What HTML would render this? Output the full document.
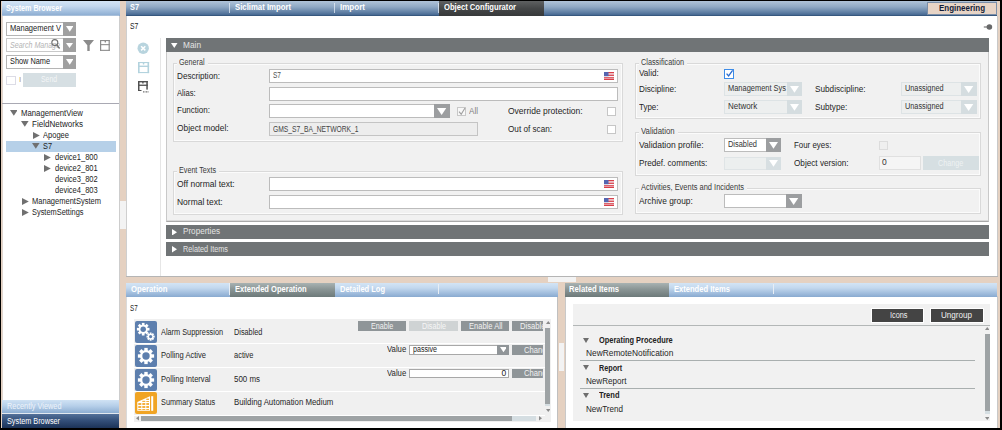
<!DOCTYPE html>
<html><head><meta charset="utf-8">
<style>
*{margin:0;padding:0;box-sizing:border-box}
html,body{width:1002px;height:430px;overflow:hidden;background:#000}
body{position:relative;font-family:"Liberation Sans",sans-serif;font-size:8px;color:#222}
.a{position:absolute}
.t{position:absolute;white-space:nowrap;line-height:10px}
</style></head><body>
<div class="a" style="left:1px;top:1px;width:999px;height:427px;background:#e5d1c1;"></div>
<div class="a" style="left:2px;top:16px;width:118px;height:384px;background:#fff;border-right:1px solid #cdcdcd;border-left:1px solid #e0d6cf"></div>
<div class="a" style="left:2px;top:1px;width:117.5px;height:15px;background:linear-gradient(#d3e4f5,#c3d8ee 35%,#a3bfde 70%,#89aad0);"></div>
<div class="a" style="left:2px;top:15px;width:117px;height:1px;background:#a9c0da;"></div>
<div class="t" style="left:6px;top:3px;font-size:8.5px;color:#fff;font-weight:bold;transform:scaleX(0.841);transform-origin:0 0;">System Browser</div>
<div class="a" style="left:6px;top:22px;width:70px;height:14px;background:#fff;border:1px solid #b5b5b5"></div>
<div class="a" style="left:63px;top:22px;width:13px;height:14px;background:#a0a0a0;"></div>
<svg class="a" style="left:65.73px;top:26.4725px" width="7.54" height="5.65"><path d="M0 0H7.54L3.77 5.65Z" fill="#fff"/></svg>
<div class="t" style="left:10px;top:23px;font-size:8.5px;color:#1a1a1a;transform:scaleX(0.885);transform-origin:0 0;">Management V</div>
<div class="a" style="left:6px;top:38px;width:70px;height:14px;background:#fff;border:1px solid #c9c9c9"></div>
<div class="a" style="left:63px;top:38px;width:13px;height:14px;background:#a0a0a0;"></div>
<svg class="a" style="left:65.73px;top:42.4725px" width="7.54" height="5.65"><path d="M0 0H7.54L3.77 5.65Z" fill="#fff"/></svg>
<div class="t" style="left:10px;top:40px;font-size:8.5px;color:#b4b4b4;font-style:italic;transform:scaleX(0.833);transform-origin:0 0;">Search Manage</div>
<svg class="a" style="left:50px;top:38px" width="12" height="14"><circle cx="4.8" cy="4.6" r="3" fill="none" stroke="#707070" stroke-width="1.1"/><line x1="6.8" y1="6.8" x2="9.6" y2="10.5" stroke="#707070" stroke-width="1.3"/></svg>
<div class="a" style="left:63px;top:38px;width:13px;height:14px;background:#a0a0a0;"></div>
<svg class="a" style="left:66px;top:42.5px" width="7" height="5"><path d="M0 0H7L3.5 5Z" fill="#fff"/></svg>
<svg class="a" style="left:83px;top:40px" width="12" height="12"><path d="M0 0H11L6.7 5.3V11H4.3V5.3Z" fill="#8c8c8c"/></svg>
<svg class="a" style="left:100px;top:40px" width="10" height="11"><g fill="#8c8c8c"><rect x="0" y="0" width="1.2" height="10.9"/><rect x="8.6" y="0" width="1.2" height="10.9"/><rect x="0" y="0" width="9.8" height="1.1"/><rect x="0" y="4.1" width="9.8" height="1.1"/><rect x="0" y="9.8" width="9.8" height="1.1"/><rect x="4.6" y="0.5" width="1.4" height="1.9" rx="0.5"/></g></svg>
<div class="a" style="left:6px;top:55px;width:70px;height:14px;background:#fff;border:1px solid #b5b5b5"></div>
<div class="a" style="left:63px;top:55px;width:13px;height:14px;background:#a0a0a0;"></div>
<svg class="a" style="left:65.73px;top:59.4725px" width="7.54" height="5.65"><path d="M0 0H7.54L3.77 5.65Z" fill="#fff"/></svg>
<div class="t" style="left:10px;top:56px;font-size:8.5px;color:#1a1a1a;transform:scaleX(0.864);transform-origin:0 0;">Show Name</div>
<div class="a" style="left:6px;top:76px;width:10px;height:9px;background:#fff;border:1px solid #dcdce6"></div>
<div class="t" style="left:19px;top:75px;font-size:8px;color:#b0a070;">I</div>
<div class="a" style="left:23px;top:73px;width:53px;height:14px;background:#d6dfe3;"></div>
<div class="t" style="left:41px;top:74px;font-size:8.5px;color:#f4f6f7;transform:scaleX(0.806);transform-origin:0 0;">Send</div>
<div class="a" style="left:2px;top:103px;width:117px;height:1px;background:#a9a9b3;"></div>
<div class="a" style="left:6px;top:141px;width:110px;height:11px;background:#b6d0e8;"></div>
<svg class="a" style="left:9.8px;top:110.2px" width="7.6" height="5.8"><path d="M0 0H7.6L3.8 5.8Z" fill="#707070"/></svg>
<div class="t" style="left:20.6px;top:108px;font-size:8.5px;color:#1c1c1c;transform:scaleX(0.912);transform-origin:0 0;">ManagementView</div>
<svg class="a" style="left:21.1px;top:121.2px" width="7.6" height="5.8"><path d="M0 0H7.6L3.8 5.8Z" fill="#707070"/></svg>
<div class="t" style="left:31.9px;top:119px;font-size:8.5px;color:#1c1c1c;transform:scaleX(0.947);transform-origin:0 0;">FieldNetworks</div>
<svg class="a" style="left:33.1px;top:131.7px" width="6.8" height="7"><path d="M0 0L6.8 3.5L0 7Z" fill="#707070"/></svg>
<div class="t" style="left:43.2px;top:130px;font-size:8.5px;color:#1c1c1c;transform:scaleX(0.887);transform-origin:0 0;">Apogee</div>
<svg class="a" style="left:32.4px;top:143.3px" width="7.6" height="5.8"><path d="M0 0H7.6L3.8 5.8Z" fill="#707070"/></svg>
<div class="t" style="left:43.2px;top:141px;font-size:8.5px;color:#1c1c1c;transform:scaleX(0.865);transform-origin:0 0;">S7</div>
<svg class="a" style="left:44.4px;top:153.8px" width="6.8" height="7"><path d="M0 0L6.8 3.5L0 7Z" fill="#707070"/></svg>
<div class="t" style="left:54.5px;top:152px;font-size:8.5px;color:#1c1c1c;transform:scaleX(0.886);transform-origin:0 0;">device1_800</div>
<svg class="a" style="left:44.4px;top:164.8px" width="6.8" height="7"><path d="M0 0L6.8 3.5L0 7Z" fill="#707070"/></svg>
<div class="t" style="left:54.5px;top:163px;font-size:8.5px;color:#1c1c1c;transform:scaleX(0.886);transform-origin:0 0;">device2_801</div>
<div class="t" style="left:54.5px;top:174px;font-size:8.5px;color:#1c1c1c;transform:scaleX(0.886);transform-origin:0 0;">device3_802</div>
<div class="t" style="left:54.5px;top:185px;font-size:8.5px;color:#1c1c1c;transform:scaleX(0.886);transform-origin:0 0;">device4_803</div>
<svg class="a" style="left:21.8px;top:198.0px" width="6.8" height="7"><path d="M0 0L6.8 3.5L0 7Z" fill="#707070"/></svg>
<div class="t" style="left:31.9px;top:196px;font-size:8.5px;color:#1c1c1c;transform:scaleX(0.885);transform-origin:0 0;">ManagementSystem</div>
<svg class="a" style="left:21.8px;top:209.0px" width="6.8" height="7"><path d="M0 0L6.8 3.5L0 7Z" fill="#707070"/></svg>
<div class="t" style="left:31.9px;top:207px;font-size:8.5px;color:#1c1c1c;transform:scaleX(0.872);transform-origin:0 0;">SystemSettings</div>
<div class="a" style="left:2px;top:400px;width:117px;height:13px;background:linear-gradient(#d0e2f4,#b6cfe9 45%,#8daed2);"></div>
<div class="t" style="left:7px;top:401px;font-size:8.5px;color:#eef3fa;transform:scaleX(0.863);transform-origin:0 0;">Recently Viewed</div>
<div class="a" style="left:2px;top:413px;width:117px;height:1px;background:#e3e9f0;"></div>
<div class="a" style="left:2px;top:414px;width:117px;height:14px;background:linear-gradient(#53719a,#34507a 45%,#1c3358);"></div>
<div class="t" style="left:7px;top:416px;font-size:8.5px;color:#fff;transform:scaleX(0.857);transform-origin:0 0;">System Browser</div>
<div class="a" style="left:126px;top:16px;width:872px;height:260px;background:#fff;border-left:1px solid #cfcfcf;border-right:1px solid #c8c8c8"></div>
<div class="a" style="left:126px;top:1px;width:871px;height:15px;background:linear-gradient(#b0c3d9,#8fa8c4 40%,#5a7aa0 80%,#3b5e8a);"></div>
<div class="a" style="left:126px;top:15px;width:871px;height:1px;background:#37587f;"></div>
<div class="t" style="left:130px;top:2px;font-size:8.5px;color:#fff;font-weight:bold;transform:scaleX(0.865);transform-origin:0 0;">S7</div>
<div class="a" style="left:229px;top:3px;width:1px;height:10px;background:linear-gradient(#d8e2ee,#c0cfe0);"></div>
<div class="a" style="left:334px;top:3px;width:1px;height:10px;background:linear-gradient(#d8e2ee,#c0cfe0);"></div>
<div class="a" style="left:438px;top:3px;width:1px;height:10px;background:linear-gradient(#d8e2ee,#c0cfe0);"></div>
<div class="t" style="left:235px;top:2px;font-size:8.5px;color:#fff;font-weight:bold;transform:scaleX(0.912);transform-origin:0 0;">Siclimat Import</div>
<div class="t" style="left:340px;top:2px;font-size:8.5px;color:#fff;font-weight:bold;transform:scaleX(0.945);transform-origin:0 0;">Import</div>
<div class="a" style="left:439px;top:1px;width:105px;height:15px;background:linear-gradient(#5f6162,#454748 50%,#37393a);"></div>
<div class="t" style="left:444px;top:2px;font-size:8.5px;color:#fff;font-weight:bold;transform:scaleX(0.897);transform-origin:0 0;">Object Configurator</div>
<div class="a" style="left:927px;top:2px;width:70px;height:13px;background:#e7d4c6;border:1px solid #7a8ea8"></div>
<div class="t" style="left:939px;top:3px;font-size:9.5px;color:#121c38;font-weight:bold;transform:scaleX(0.838);transform-origin:0 0;">Engineering</div>
<div class="t" style="left:130px;top:21px;font-size:9px;color:#222;transform:scaleX(0.755);transform-origin:0 0;">S7</div>
<svg class="a" style="left:982px;top:23px" width="12" height="8"><line x1="1.8" y1="4" x2="5" y2="4" stroke="#8a8a8a" stroke-width="1.4"/><circle cx="7.4" cy="4" r="2.8" fill="#676869"/></svg>
<div class="a" style="left:160px;top:38px;width:1px;height:238px;background:#e6e6e6;"></div>
<svg class="a" style="left:137px;top:41.5px" width="13" height="13"><circle cx="6.2" cy="6.3" r="5.7" fill="#b8d4de"/><path d="M4.1 4.2L8.3 8.4M8.3 4.2L4.1 8.4" stroke="#fff" stroke-width="1.5"/></svg>
<svg class="a" style="left:137.8px;top:61.8px" width="12" height="12"><g fill="#b3d3de"><rect x="0" y="0" width="1.6" height="11.1"/><rect x="9.5" y="0" width="1.6" height="11.1"/><rect x="0" y="0" width="11.1" height="1.1"/><rect x="0" y="3.6" width="11.1" height="1.4"/><rect x="0" y="10" width="11.1" height="1.1"/><rect x="4.8" y="0.6" width="1.5" height="1.8" rx="0.5"/></g></svg>
<svg class="a" style="left:138px;top:81px" width="12" height="12"><g fill="#505050"><rect x="0" y="0" width="1.5" height="10"/><rect x="0" y="9" width="3.5" height="1"/><rect x="8.3" y="0" width="1.5" height="8.6"/><rect x="0" y="0" width="9.8" height="1.4"/><rect x="0" y="3.6" width="9.8" height="1.3"/><rect x="4.2" y="0.8" width="1.4" height="1.8" rx="0.5"/><rect x="5" y="10.4" width="1" height="1"/><rect x="6.5" y="10.4" width="1" height="1"/><rect x="8" y="10.4" width="1" height="1"/><rect x="9.5" y="10.4" width="1" height="1"/></g></svg>
<div class="a" style="left:166px;top:38px;width:823px;height:14px;background:#707476;"></div>
<svg class="a" style="left:171px;top:42.5px" width="6.5" height="5"><path d="M0 0H6.5L3.25 5Z" fill="#fff"/></svg>
<div class="t" style="left:183px;top:39.5px;font-size:8.5px;color:#e4e4e4;transform:scaleX(0.978);transform-origin:0 0;">Main</div>
<div class="a" style="left:166px;top:52px;width:823px;height:170px;background:#f1f1f1;border:1px solid #c9c9c9;border-top:none;border-bottom:1px solid #a9a9a9"></div>
<div class="a" style="left:167px;top:220px;width:821px;height:1px;background:#d9d9d9;"></div>
<div class="a" style="left:173px;top:63px;width:450px;height:79px;background:transparent;border:1px solid #d9d9d9"></div>
<div class="a" style="left:174px;top:64px;width:448px;height:77px;background:transparent;border:1px solid #fbfbfb"></div>
<div class="a" style="left:177px;top:62px;width:30.5px;height:3px;background:#f1f1f1;"></div>
<div class="t" style="left:179px;top:57px;font-size:8.5px;color:#3a3a3a;transform:scaleX(0.843);transform-origin:0 0;">General</div>
<div class="t" style="left:177px;top:71px;font-size:9px;color:#1f1f1f;transform:scaleX(0.905);transform-origin:0 0;">Description:</div>
<div class="t" style="left:177px;top:88px;font-size:9px;color:#1f1f1f;transform:scaleX(0.850);transform-origin:0 0;">Alias:</div>
<div class="t" style="left:177px;top:105px;font-size:9px;color:#1f1f1f;transform:scaleX(0.892);transform-origin:0 0;">Function:</div>
<div class="t" style="left:177px;top:123px;font-size:9px;color:#1f1f1f;transform:scaleX(0.929);transform-origin:0 0;">Object model:</div>
<div class="a" style="left:269px;top:69px;width:349px;height:14px;background:#fff;border:1px solid #bcbcbc"></div>
<div class="t" style="left:273px;top:70px;font-size:8.5px;color:#505050;transform:scaleX(0.769);transform-origin:0 0;">S7</div>
<svg class="a" style="left:604px;top:72px" width="10" height="8"><rect width="10" height="8" fill="#f4f4f8"/><g fill="#d9404a"><rect y="0" width="10" height="1.3"/><rect y="2.6" width="10" height="1.3"/><rect y="5.2" width="10" height="1.3"/><rect y="7" width="10" height="1"/></g><rect width="4.5" height="4.2" fill="#5565b0"/></svg>
<div class="a" style="left:269px;top:87px;width:349px;height:14px;background:#fff;border:1px solid #bcbcbc"></div>
<div class="a" style="left:269px;top:104px;width:181px;height:14px;background:#fff;border:1px solid #bcbcbc"></div>
<div class="a" style="left:434px;top:104px;width:16px;height:14px;background:#9c9ea0;"></div>
<svg class="a" style="left:437.36px;top:107.82px" width="9.28" height="6.96"><path d="M0 0H9.28L4.64 6.96Z" fill="#fff"/></svg>
<div class="a" style="left:457px;top:106.5px;width:9px;height:9.5px;background:#f8f8f8;border:1px solid #c8c8c8"></div>
<svg class="a" style="left:458px;top:107px" width="8" height="9"><path d="M1 4.6L3.2 7.2L7 1" fill="none" stroke="#a0a0a0" stroke-width="1.1"/></svg>
<div class="t" style="left:469px;top:106px;font-size:8.5px;color:#808080;transform:scaleX(0.952);transform-origin:0 0;">All</div>
<div class="a" style="left:269px;top:122px;width:209px;height:14px;background:#ededed;border:1px solid #c4c4c4"></div>
<div class="t" style="left:273px;top:124px;font-size:8.5px;color:#444;transform:scaleX(0.791);transform-origin:0 0;">GMS_S7_BA_NETWORK_1</div>
<div class="t" style="left:508px;top:106px;font-size:9px;color:#1f1f1f;transform:scaleX(0.945);transform-origin:0 0;">Override protection:</div>
<div class="t" style="left:508px;top:124px;font-size:9px;color:#1f1f1f;transform:scaleX(0.906);transform-origin:0 0;">Out of scan:</div>
<div class="a" style="left:607px;top:107px;width:9px;height:9px;background:#fff;border:1px solid #c6c6c6"></div>
<div class="a" style="left:607px;top:125px;width:9px;height:9px;background:#fff;border:1px solid #c6c6c6"></div>
<div class="a" style="left:173px;top:171px;width:450px;height:44px;background:transparent;border:1px solid #d9d9d9"></div>
<div class="a" style="left:174px;top:172px;width:448px;height:42px;background:transparent;border:1px solid #fbfbfb"></div>
<div class="a" style="left:177px;top:170px;width:42px;height:3px;background:#f1f1f1;"></div>
<div class="t" style="left:179px;top:165px;font-size:8.5px;color:#3a3a3a;transform:scaleX(0.845);transform-origin:0 0;">Event Texts</div>
<div class="t" style="left:177px;top:179px;font-size:9px;color:#1f1f1f;transform:scaleX(0.939);transform-origin:0 0;">Off normal text:</div>
<div class="t" style="left:177px;top:197px;font-size:9px;color:#1f1f1f;transform:scaleX(0.940);transform-origin:0 0;">Normal text:</div>
<div class="a" style="left:269px;top:177px;width:349px;height:14px;background:#fff;border:1px solid #bcbcbc"></div>
<svg class="a" style="left:604px;top:180px" width="10" height="8"><rect width="10" height="8" fill="#f4f4f8"/><g fill="#d9404a"><rect y="0" width="10" height="1.3"/><rect y="2.6" width="10" height="1.3"/><rect y="5.2" width="10" height="1.3"/><rect y="7" width="10" height="1"/></g><rect width="4.5" height="4.2" fill="#5565b0"/></svg>
<div class="a" style="left:269px;top:195px;width:349px;height:14px;background:#fff;border:1px solid #bcbcbc"></div>
<svg class="a" style="left:604px;top:198px" width="10" height="8"><rect width="10" height="8" fill="#f4f4f8"/><g fill="#d9404a"><rect y="0" width="10" height="1.3"/><rect y="2.6" width="10" height="1.3"/><rect y="5.2" width="10" height="1.3"/><rect y="7" width="10" height="1"/></g><rect width="4.5" height="4.2" fill="#5565b0"/></svg>
<div class="a" style="left:635px;top:63px;width:346px;height:56px;background:transparent;border:1px solid #d9d9d9"></div>
<div class="a" style="left:636px;top:64px;width:344px;height:54px;background:transparent;border:1px solid #fbfbfb"></div>
<div class="a" style="left:639px;top:62px;width:48px;height:3px;background:#f1f1f1;"></div>
<div class="t" style="left:641px;top:57px;font-size:8.5px;color:#3a3a3a;transform:scaleX(0.859);transform-origin:0 0;">Classification</div>
<div class="t" style="left:639px;top:68px;font-size:9px;color:#1f1f1f;transform:scaleX(0.902);transform-origin:0 0;">Valid:</div>
<div class="t" style="left:639px;top:84px;font-size:9px;color:#1f1f1f;transform:scaleX(0.910);transform-origin:0 0;">Discipline:</div>
<div class="t" style="left:639px;top:102px;font-size:9px;color:#1f1f1f;transform:scaleX(0.882);transform-origin:0 0;">Type:</div>
<div class="a" style="left:724px;top:69px;width:10px;height:9.5px;background:#fff;border:1px solid #3d8ce8"></div>
<svg class="a" style="left:725px;top:69px" width="9" height="9"><path d="M1.6 4.6L3.6 7L7.6 1.4" fill="none" stroke="#2b6dd0" stroke-width="1.3"/></svg>
<div class="a" style="left:724px;top:82px;width:78px;height:14px;background:#edefef;border:1px solid #dde3e5"></div>
<div class="a" style="left:786.5px;top:82px;width:15.5px;height:14px;background:#d5dde0;"></div>
<svg class="a" style="left:789.755px;top:85.92875px" width="8.99" height="6.74"><path d="M0 0H8.99L4.495 6.74Z" fill="#fff"/></svg>
<div class="t" style="left:728px;top:83px;font-size:8.5px;color:#333;transform:scaleX(0.877);transform-origin:0 0;">Management Sys</div>
<div class="a" style="left:724px;top:100px;width:78px;height:14px;background:#edefef;border:1px solid #dde3e5"></div>
<div class="a" style="left:786.5px;top:100px;width:15.5px;height:14px;background:#d5dde0;"></div>
<svg class="a" style="left:789.755px;top:103.92875px" width="8.99" height="6.74"><path d="M0 0H8.99L4.495 6.74Z" fill="#fff"/></svg>
<div class="t" style="left:728px;top:101px;font-size:8.5px;color:#333;transform:scaleX(0.939);transform-origin:0 0;">Network</div>
<div class="t" style="left:815px;top:84px;font-size:9px;color:#1f1f1f;transform:scaleX(0.911);transform-origin:0 0;">Subdiscipline:</div>
<div class="t" style="left:815px;top:102px;font-size:9px;color:#1f1f1f;transform:scaleX(0.909);transform-origin:0 0;">Subtype:</div>
<div class="a" style="left:901px;top:82px;width:76px;height:14px;background:#edefef;border:1px solid #dde3e5"></div>
<div class="a" style="left:961px;top:82px;width:16px;height:14px;background:#d5dde0;"></div>
<svg class="a" style="left:964.36px;top:85.82px" width="9.28" height="6.96"><path d="M0 0H9.28L4.64 6.96Z" fill="#fff"/></svg>
<div class="t" style="left:905px;top:83px;font-size:8.5px;color:#333;transform:scaleX(0.860);transform-origin:0 0;">Unassigned</div>
<div class="a" style="left:901px;top:100px;width:76px;height:14px;background:#edefef;border:1px solid #dde3e5"></div>
<div class="a" style="left:961px;top:100px;width:16px;height:14px;background:#d5dde0;"></div>
<svg class="a" style="left:964.36px;top:103.82px" width="9.28" height="6.96"><path d="M0 0H9.28L4.64 6.96Z" fill="#fff"/></svg>
<div class="t" style="left:905px;top:101px;font-size:8.5px;color:#333;transform:scaleX(0.860);transform-origin:0 0;">Unassigned</div>
<div class="a" style="left:635px;top:132px;width:346px;height:44px;background:transparent;border:1px solid #d9d9d9"></div>
<div class="a" style="left:636px;top:133px;width:344px;height:42px;background:transparent;border:1px solid #fbfbfb"></div>
<div class="a" style="left:639px;top:131px;width:38.5px;height:3px;background:#f1f1f1;"></div>
<div class="t" style="left:641px;top:125.5px;font-size:8.5px;color:#3a3a3a;transform:scaleX(0.913);transform-origin:0 0;">Validation</div>
<div class="t" style="left:639px;top:139.5px;font-size:9px;color:#1f1f1f;transform:scaleX(0.944);transform-origin:0 0;">Validation profile:</div>
<div class="t" style="left:639px;top:158px;font-size:9px;color:#1f1f1f;transform:scaleX(0.905);transform-origin:0 0;">Predef. comments:</div>
<div class="a" style="left:724px;top:138px;width:57px;height:14px;background:#fff;border:1px solid #bcbcbc"></div>
<div class="a" style="left:765.5px;top:138px;width:15.5px;height:14px;background:#9c9ea0;"></div>
<svg class="a" style="left:768.755px;top:141.92875px" width="8.99" height="6.74"><path d="M0 0H8.99L4.495 6.74Z" fill="#fff"/></svg>
<div class="t" style="left:728px;top:139px;font-size:8.5px;color:#333;transform:scaleX(0.874);transform-origin:0 0;">Disabled</div>
<div class="a" style="left:724px;top:157px;width:57px;height:13px;background:#ecefef;border:1px solid #dfe4e6"></div>
<div class="a" style="left:765.5px;top:157px;width:15.5px;height:13px;background:#d7dfe2;"></div>
<svg class="a" style="left:768.755px;top:160.42875px" width="8.99" height="6.74"><path d="M0 0H8.99L4.495 6.74Z" fill="#fff"/></svg>
<div class="t" style="left:794px;top:139.5px;font-size:9px;color:#1f1f1f;transform:scaleX(0.878);transform-origin:0 0;">Four eyes:</div>
<div class="t" style="left:794px;top:157.5px;font-size:9px;color:#1f1f1f;transform:scaleX(0.908);transform-origin:0 0;">Object version:</div>
<div class="a" style="left:879px;top:141px;width:9px;height:9px;background:#efefef;border:1px solid #dcdcdc"></div>
<div class="a" style="left:879px;top:156px;width:42px;height:14px;background:#f5f5f5;border:1px solid #e0e0e0"></div>
<div class="t" style="left:882px;top:157px;font-size:8.5px;color:#333;">0</div>
<div class="a" style="left:923px;top:156px;width:56px;height:14px;background:#d6dfe2;"></div>
<div class="t" style="left:938px;top:157.5px;font-size:8.5px;color:#eef2f3;transform:scaleX(0.849);transform-origin:0 0;">Change</div>
<div class="a" style="left:635px;top:188px;width:346px;height:26px;background:transparent;border:1px solid #d9d9d9"></div>
<div class="a" style="left:636px;top:189px;width:344px;height:24px;background:transparent;border:1px solid #fbfbfb"></div>
<div class="a" style="left:639px;top:187px;width:108px;height:3px;background:#f1f1f1;"></div>
<div class="t" style="left:641px;top:181.5px;font-size:8.5px;color:#3a3a3a;transform:scaleX(0.879);transform-origin:0 0;">Activities, Events and Incidents</div>
<div class="t" style="left:639px;top:195.5px;font-size:9px;color:#1f1f1f;transform:scaleX(0.927);transform-origin:0 0;">Archive group:</div>
<div class="a" style="left:724px;top:194px;width:78px;height:14px;background:#fff;border:1px solid #bcbcbc"></div>
<div class="a" style="left:786px;top:194px;width:16px;height:14px;background:#9c9ea0;"></div>
<svg class="a" style="left:789.36px;top:197.82000000000002px" width="9.28" height="6.96"><path d="M0 0H9.28L4.64 6.96Z" fill="#fff"/></svg>
<div class="a" style="left:166px;top:224.5px;width:823px;height:14px;background:#707476;"></div>
<svg class="a" style="left:172px;top:228.5px" width="5" height="6.5"><path d="M0 0L5 3.25L0 6.5Z" fill="#fff"/></svg>
<div class="t" style="left:183px;top:226px;font-size:8.5px;color:#e4e4e4;transform:scaleX(0.955);transform-origin:0 0;">Properties</div>
<div class="a" style="left:166px;top:242px;width:823px;height:14px;background:#707476;"></div>
<svg class="a" style="left:172px;top:246px" width="5" height="6.5"><path d="M0 0L5 3.25L0 6.5Z" fill="#fff"/></svg>
<div class="t" style="left:183px;top:243.5px;font-size:8.5px;color:#e4e4e4;transform:scaleX(0.858);transform-origin:0 0;">Related Items</div>
<div class="a" style="left:126px;top:276px;width:872px;height:1px;background:#b5b5b5;"></div>
<div class="a" style="left:126px;top:296px;width:432px;height:132px;background:#fff;border-left:1px solid #dadada;border-right:1px solid #c0c0c0"></div>
<div class="a" style="left:126px;top:282.5px;width:432px;height:14px;background:linear-gradient(#d3e4f5,#c3d8ee 35%,#a3bfde 70%,#89aad0);"></div>
<div class="t" style="left:131px;top:284px;font-size:8.5px;color:#fff;font-weight:bold;transform:scaleX(0.909);transform-origin:0 0;">Operation</div>
<div class="a" style="left:229px;top:283px;width:1px;height:12px;background:#e8eef5;"></div>
<div class="a" style="left:230px;top:282.5px;width:105px;height:14px;background:linear-gradient(#a8b2b2,#8a9595 45%,#6d7a7a);"></div>
<div class="t" style="left:235px;top:284px;font-size:8.5px;color:#fff;font-weight:bold;transform:scaleX(0.887);transform-origin:0 0;">Extended Operation</div>
<div class="t" style="left:340px;top:284px;font-size:8.5px;color:#fff;font-weight:bold;transform:scaleX(0.882);transform-origin:0 0;">Detailed Log</div>
<div class="a" style="left:438px;top:284px;width:1px;height:10px;background:#e8eef5;"></div>
<div class="t" style="left:130px;top:303px;font-size:9px;color:#222;transform:scaleX(0.691);transform-origin:0 0;">S7</div>
<div class="a" style="left:134px;top:318.5px;width:411px;height:24px;background:#f0f0f0;"></div>
<div class="a" style="left:134px;top:343.5px;width:411px;height:23px;background:#f0f0f0;"></div>
<div class="a" style="left:134px;top:367.5px;width:411px;height:23px;background:#f0f0f0;"></div>
<div class="a" style="left:134px;top:391.5px;width:411px;height:23.5px;background:#f0f0f0;"></div>
<svg class="a" style="left:135px;top:320.5px" width="22" height="22"><rect width="22" height="22" rx="2" fill="#5d7fae"/><g transform="translate(8.2,8.2)"><circle r="4.5" fill="#fff"/><rect x="-1.35" y="-6.3" width="2.7" height="12.6" fill="#fff" transform="rotate(0.0)"/><rect x="-1.35" y="-6.3" width="2.7" height="12.6" fill="#fff" transform="rotate(45.0)"/><rect x="-1.35" y="-6.3" width="2.7" height="12.6" fill="#fff" transform="rotate(90.0)"/><rect x="-1.35" y="-6.3" width="2.7" height="12.6" fill="#fff" transform="rotate(135.0)"/><circle r="2.7" fill="#5d7fae"/></g><g transform="translate(15.6,15.6)"><circle r="2.9" fill="#fff"/><rect x="-0.95" y="-4.1" width="1.9" height="8.2" fill="#fff" transform="rotate(0.0)"/><rect x="-0.95" y="-4.1" width="1.9" height="8.2" fill="#fff" transform="rotate(45.0)"/><rect x="-0.95" y="-4.1" width="1.9" height="8.2" fill="#fff" transform="rotate(90.0)"/><rect x="-0.95" y="-4.1" width="1.9" height="8.2" fill="#fff" transform="rotate(135.0)"/><circle r="1.6" fill="#5d7fae"/></g></svg>
<svg class="a" style="left:135px;top:344.5px" width="22" height="22"><rect width="22" height="22" rx="2" fill="#5d7fae"/><g transform="translate(11,11)"><circle r="6" fill="#fff"/><rect x="-1.7" y="-8.1" width="3.4" height="16.2" fill="#fff" transform="rotate(0.0)"/><rect x="-1.7" y="-8.1" width="3.4" height="16.2" fill="#fff" transform="rotate(45.0)"/><rect x="-1.7" y="-8.1" width="3.4" height="16.2" fill="#fff" transform="rotate(90.0)"/><rect x="-1.7" y="-8.1" width="3.4" height="16.2" fill="#fff" transform="rotate(135.0)"/><circle r="3.7" fill="#5d7fae"/></g></svg>
<svg class="a" style="left:135px;top:368.5px" width="22" height="22"><rect width="22" height="22" rx="2" fill="#5d7fae"/><g transform="translate(11,11)"><circle r="6" fill="#fff"/><rect x="-1.7" y="-8.1" width="3.4" height="16.2" fill="#fff" transform="rotate(0.0)"/><rect x="-1.7" y="-8.1" width="3.4" height="16.2" fill="#fff" transform="rotate(45.0)"/><rect x="-1.7" y="-8.1" width="3.4" height="16.2" fill="#fff" transform="rotate(90.0)"/><rect x="-1.7" y="-8.1" width="3.4" height="16.2" fill="#fff" transform="rotate(135.0)"/><circle r="3.7" fill="#5d7fae"/></g></svg>
<svg class="a" style="left:135px;top:391.5px" width="22" height="22"><rect width="22" height="22" rx="2" fill="#f0a424"/>
<path d="M2.3 10L15 4.2V18.8H2.3Z" fill="#fff"/><rect x="16.2" y="4.2" width="2" height="14.6" fill="#fff"/>
<g fill="#f4b040"><rect x="3.3" y="11" width="3" height="2"/><rect x="7.3" y="11" width="3" height="2"/><rect x="11.3" y="11" width="2.7" height="2"/>
<rect x="3.3" y="14" width="3" height="2"/><rect x="7.3" y="14" width="3" height="2"/><rect x="11.3" y="14" width="2.7" height="2"/>
<rect x="3.3" y="17" width="3" height="1"/><rect x="7.3" y="17" width="3" height="1"/><rect x="11.3" y="17" width="2.7" height="1"/>
<rect x="7.3" y="8.8" width="3" height="1.2"/><rect x="11.3" y="6.6" width="2.7" height="1.4"/><rect x="11.3" y="9" width="2.7" height="1"/></g></svg>
<div class="t" style="left:161px;top:327px;font-size:8.5px;color:#262626;transform:scaleX(0.864);transform-origin:0 0;">Alarm Suppression</div>
<div class="t" style="left:233.6px;top:327px;font-size:8.5px;color:#262626;transform:scaleX(0.859);transform-origin:0 0;">Disabled</div>
<div class="t" style="left:161px;top:350px;font-size:8.5px;color:#262626;transform:scaleX(0.890);transform-origin:0 0;">Polling Active</div>
<div class="t" style="left:233.6px;top:350px;font-size:8.5px;color:#262626;transform:scaleX(0.878);transform-origin:0 0;">active</div>
<div class="t" style="left:161px;top:374px;font-size:8.5px;color:#262626;transform:scaleX(0.888);transform-origin:0 0;">Polling Interval</div>
<div class="t" style="left:233.6px;top:374px;font-size:8.5px;color:#262626;transform:scaleX(0.934);transform-origin:0 0;">500 ms</div>
<div class="t" style="left:161px;top:397px;font-size:8.5px;color:#262626;transform:scaleX(0.862);transform-origin:0 0;">Summary Status</div>
<div class="t" style="left:233.6px;top:397px;font-size:8.5px;color:#262626;transform:scaleX(0.922);transform-origin:0 0;">Building Automation Medium</div>
<div class="a" style="left:357.5px;top:321px;width:48.5px;height:10px;background:#8f9598;"></div>
<div class="t" style="left:371px;top:321px;font-size:8.5px;color:#f2f2f2;transform:scaleX(0.843);transform-origin:0 0;">Enable</div>
<div class="a" style="left:409px;top:321px;width:49px;height:10px;background:#cfd3d4;"></div>
<div class="t" style="left:422px;top:321px;font-size:8.5px;color:#f6f6f6;transform:scaleX(0.847);transform-origin:0 0;">Disable</div>
<div class="a" style="left:461px;top:321px;width:48px;height:10px;background:#8f9598;"></div>
<div class="t" style="left:469px;top:321px;font-size:8.5px;color:#f2f2f2;transform:scaleX(0.886);transform-origin:0 0;">Enable All</div>
<div class="a" style="left:512.3px;top:321px;width:30.5px;height:10px;background:#8f9598;overflow:hidden"><div class="t" style="left:7.4px;top:0px;font-size:8.5px;color:#f2f2f2;transform:scaleX(0.9);transform-origin:0 0">Disable</div></div>
<div class="t" style="left:387.3px;top:344px;font-size:8.5px;color:#262626;transform:scaleX(0.910);transform-origin:0 0;">Value</div>
<div class="a" style="left:409px;top:345px;width:100px;height:9.5px;background:#fff;border:1px solid #a8a8a8"></div>
<div class="a" style="left:497px;top:345px;width:12px;height:9.5px;background:#909598;"></div>
<svg class="a" style="left:499.52px;top:347.44px" width="6.96" height="5.22"><path d="M0 0H6.96L3.48 5.22Z" fill="#fff"/></svg>
<div class="t" style="left:413px;top:343.5px;font-size:8.5px;color:#222;transform:scaleX(0.833);transform-origin:0 0;">passive</div>
<div class="a" style="left:512.3px;top:345px;width:30.5px;height:9.5px;background:#8f9598;overflow:hidden"><div class="t" style="left:11.4px;top:-0.5px;font-size:8.5px;color:#f2f2f2;transform:scaleX(0.9);transform-origin:0 0">Change</div></div>
<div class="t" style="left:387.3px;top:367.5px;font-size:8.5px;color:#262626;transform:scaleX(0.910);transform-origin:0 0;">Value</div>
<div class="a" style="left:409px;top:368.5px;width:100px;height:9.5px;background:#fff;border:1px solid #a8a8a8"></div>
<div class="t" style="left:501.5px;top:367.5px;font-size:8.5px;color:#222;">0</div>
<div class="a" style="left:512.3px;top:368.5px;width:30.5px;height:9.5px;background:#8f9598;overflow:hidden"><div class="t" style="left:11.4px;top:-0.5px;font-size:8.5px;color:#f2f2f2;transform:scaleX(0.9);transform-origin:0 0">Change</div></div>
<div class="a" style="left:544.5px;top:318.5px;width:6px;height:97px;background:#f0f0f0;"></div>
<svg class="a" style="left:545.5px;top:320.5px" width="4.5" height="3"><path d="M0 3H4.5L2.25 0Z" fill="#8a8a8a"/></svg>
<div class="a" style="left:545px;top:328px;width:5px;height:76px;background:#9ea3a5;"></div>
<div class="a" style="left:545px;top:404px;width:5px;height:2px;background:#d5dee2;"></div>
<svg class="a" style="left:545.5px;top:408.5px" width="4.5" height="3"><path d="M0 0H4.5L2.25 3Z" fill="#8a8a8a"/></svg>
<div class="a" style="left:134px;top:415.5px;width:417px;height:6px;background:#f0f0f0;"></div>
<svg class="a" style="left:135.5px;top:416.3px" width="3" height="4.5"><path d="M3 0L0 2.25L3 4.5Z" fill="#8a8a8a"/></svg>
<div class="a" style="left:141px;top:415.8px;width:371px;height:5px;background:#9ea3a5;"></div>
<div class="a" style="left:512px;top:415.8px;width:24px;height:5px;background:#d5dee2;"></div>
<svg class="a" style="left:538.5px;top:416.3px" width="3" height="4.5"><path d="M0 0L3 2.25L0 4.5Z" fill="#8a8a8a"/></svg>
<div class="a" style="left:119.5px;top:201px;width:6px;height:28px;background:#f3f3f3;"></div>
<div class="a" style="left:548px;top:277px;width:28px;height:5px;background:#f3f3f3;"></div>
<div class="a" style="left:559px;top:343px;width:5px;height:28px;background:#f3f3f3;"></div>
<div class="a" style="left:565px;top:296px;width:433px;height:132px;background:#fff;border-left:1px solid #c9c9c9;border-right:1px solid #c8c8c8"></div>
<div class="a" style="left:565px;top:282.5px;width:432px;height:14px;background:linear-gradient(#d3e4f5,#c3d8ee 35%,#a3bfde 70%,#89aad0);"></div>
<div class="a" style="left:565px;top:282.5px;width:104px;height:14px;background:linear-gradient(#a8b2b2,#8a9595 45%,#6d7a7a);"></div>
<div class="t" style="left:569px;top:284px;font-size:8.5px;color:#fff;font-weight:bold;transform:scaleX(0.905);transform-origin:0 0;">Related Items</div>
<div class="t" style="left:674px;top:284px;font-size:8.5px;color:#fff;font-weight:bold;transform:scaleX(0.891);transform-origin:0 0;">Extended Items</div>
<div class="a" style="left:773px;top:284px;width:1px;height:10px;background:#e8eef5;"></div>
<div class="a" style="left:573px;top:304px;width:417px;height:117px;background:#f1f1f1;"></div>
<div class="a" style="left:871px;top:307.5px;width:53px;height:15px;background:#444;border:1px solid #fff"></div>
<div class="t" style="left:890px;top:310px;font-size:8.5px;color:#f0f0f0;transform:scaleX(0.862);transform-origin:0 0;">Icons</div>
<div class="a" style="left:930px;top:307.5px;width:54px;height:15px;background:#444;border:1px solid #fff"></div>
<div class="t" style="left:941px;top:310px;font-size:8.5px;color:#f0f0f0;transform:scaleX(0.951);transform-origin:0 0;">Ungroup</div>
<div class="a" style="left:573px;top:325px;width:417px;height:1px;background:#b3b7b7;"></div>
<svg class="a" style="left:583.3px;top:337.5px" width="6" height="5"><path d="M0 0H6L3.0 5Z" fill="#6e6e6e"/></svg>
<div class="t" style="left:599px;top:335px;font-size:8.5px;color:#222;font-weight:bold;transform:scaleX(0.872);transform-origin:0 0;">Operating Procedure</div>
<div class="t" style="left:586px;top:348px;font-size:8.5px;color:#262626;transform:scaleX(0.983);transform-origin:0 0;">NewRemoteNotification</div>
<div class="a" style="left:579.5px;top:360px;width:395px;height:1px;background:#a9afaf;"></div>
<svg class="a" style="left:583.3px;top:365px" width="6" height="5"><path d="M0 0H6L3.0 5Z" fill="#6e6e6e"/></svg>
<div class="t" style="left:599px;top:362.5px;font-size:8.5px;color:#222;font-weight:bold;transform:scaleX(0.850);transform-origin:0 0;">Report</div>
<div class="t" style="left:586px;top:376px;font-size:8.5px;color:#262626;transform:scaleX(0.953);transform-origin:0 0;">NewReport</div>
<div class="a" style="left:579.5px;top:388px;width:395px;height:1px;background:#a9afaf;"></div>
<svg class="a" style="left:583.3px;top:393px" width="6" height="5"><path d="M0 0H6L3.0 5Z" fill="#6e6e6e"/></svg>
<div class="t" style="left:599px;top:390px;font-size:8.5px;color:#222;font-weight:bold;transform:scaleX(0.886);transform-origin:0 0;">Trend</div>
<div class="t" style="left:586px;top:403.5px;font-size:8.5px;color:#262626;transform:scaleX(0.951);transform-origin:0 0;">NewTrend</div>
<svg class="a" style="left:984.5px;top:327px" width="4.5" height="3"><path d="M0 3H4.5L2.25 0Z" fill="#8a8a8a"/></svg>
<div class="a" style="left:984.5px;top:333.5px;width:5px;height:77px;background:#9ea3a5;"></div>
<div class="a" style="left:984.5px;top:410.5px;width:5px;height:3px;background:#d5dee2;"></div>
<svg class="a" style="left:984.5px;top:416.5px" width="4.5" height="3"><path d="M0 0H4.5L2.25 3Z" fill="#8a8a8a"/></svg>
</body></html>
